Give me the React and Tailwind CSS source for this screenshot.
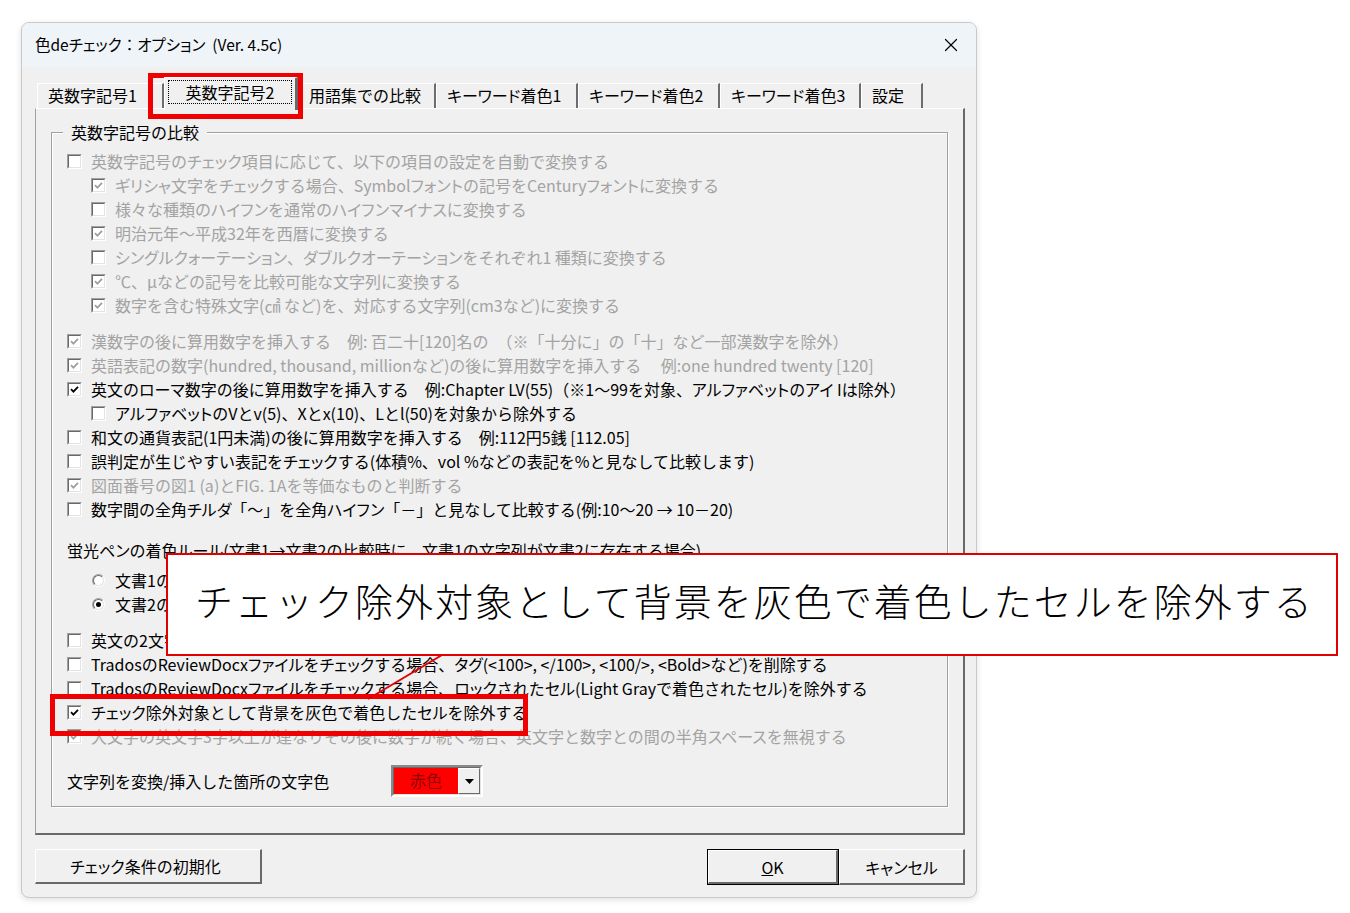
import React from "react";
import { X } from "lucide-react";

const FONT = { fontFamily: '"Noto Sans CJK JP", "Noto Sans", sans-serif' };

function J({ text }) {
  const parts = text.split(/([\u30A0-\u30FF]+)/);
  return parts.map((p, i) =>
    i % 2 ? (
      <span key={i} className="[font-feature-settings:'palt']">{p}</span>
    ) : (
      <React.Fragment key={i}>{p}</React.Fragment>
    )
  );
}

function Check({ checked, disabled }) {
  return (
    <span className="relative inline-block w-[15px] h-[15px] shrink-0 border border-t-[#a0a0a0] border-l-[#a0a0a0] border-b-white border-r-white">
      <span className="absolute inset-0 border border-t-[#696969] border-l-[#696969] border-b-[#e3e3e3] border-r-[#e3e3e3] bg-white flex items-center justify-center">
        {checked && (
          <svg width="9" height="9" viewBox="0 0 9 9">
            <path d="M1 4.2 L3.4 6.6 L8 1.8" fill="none" stroke={disabled ? "#a0a0a0" : "#000"} strokeWidth="1.8" />
          </svg>
        )}
      </span>
    </span>
  );
}

function Radio({ checked }) {
  return (
    <span className="relative inline-block w-[13px] h-[13px] shrink-0 rounded-full border border-t-[#a0a0a0] border-l-[#a0a0a0] border-b-white border-r-white">
      <span className="absolute inset-0 rounded-full border border-t-[#696969] border-l-[#696969] border-b-[#e3e3e3] border-r-[#e3e3e3] bg-white flex items-center justify-center">
        {checked && <span className="w-[5px] h-[5px] rounded-full bg-black" />}
      </span>
    </span>
  );
}

function Row({ level = 0, checked, disabled, text, mt = "" }) {
  return (
    <div className={`flex items-center h-[24px] ${level ? "pl-[24px]" : ""} ${mt}`}>
      <Check checked={checked} disabled={disabled} />
      <span className={`ml-[9px] whitespace-pre ${disabled ? "text-[#a3a3a3]" : "text-black"}`}>
        <J text={text} />
      </span>
    </div>
  );
}

function RadioRow({ checked, text, mt = "" }) {
  return (
    <div className={`flex items-center h-[24px] pl-[25px] ${mt}`}>
      <Radio checked={checked} />
      <span className="ml-[10px] whitespace-pre text-black">
        <J text={text} />
      </span>
    </div>
  );
}

const tabs = [
  { label: "英数字記号1", w: "w-[127px]" },
  { label: "英数字記号2", w: "w-[134px]", selected: true },
  { label: "用語集での比較", w: "w-[138px]" },
  { label: "キーワード着色1", w: "w-[142px]" },
  { label: "キーワード着色2", w: "w-[142px]" },
  { label: "キーワード着色3", w: "w-[141px]" },
  { label: "設定", w: "w-[62px]" },
];

export default function App() {
  return (
    <div className="relative w-[1350px] h-[913px] bg-white overflow-hidden text-[16px]" style={FONT}>
      <div className="pl-[21px] pt-[22px]">
        <div className="w-[956px] h-[876px] rounded-[8px] border border-[#c9c9c9] bg-[#f0f0f0] overflow-hidden flex flex-col shadow-[0_2px_6px_rgba(0,0,0,0.12)]">
          {/* Title bar */}
          <div className="h-[44px] shrink-0 bg-[#eff4f9] flex items-center justify-between pl-[13px] pr-[14px]">
            <span className="text-[15.5px] text-black whitespace-pre">
              <J text="色deチェック：オプション  (Ver. 4.5c)" />
            </span>
            <X size={22} strokeWidth={1.3} className="text-black" />
          </div>

          <div className="flex-1 flex flex-col pl-[13px] pr-[10px] pt-[9px]">
            {/* Tabs */}
            <div className="flex items-end h-[32px] pl-[2px]">
              {tabs.map((t) =>
                t.selected ? (
                  <div
                    key={t.label}
                    className={`${t.w} h-[33px] -mb-[2px] relative z-10 bg-[#f0f0f0] border-t border-l border-white border-r-[3px] border-r-[#696969] flex items-start px-[3px] pt-[2px]`}
                  >
                    <span className="flex-1 border border-dotted border-black h-[24px] flex items-center justify-center leading-none">{t.label}</span>
                  </div>
                ) : (
                  <div
                    key={t.label}
                    className={`${t.w} h-[25px] border-t border-l border-white border-r-2 border-r-[#6d6d6d] flex items-center pl-[10px] pb-[3px] leading-none whitespace-pre`}
                  >
                    <J text={t.label} />
                  </div>
                )
              )}
            </div>

            {/* Panel */}
            <div className="w-[930px] h-[727px] border-t border-l border-t-white border-l-[#a0a0a0] border-r-2 border-r-[#696969] border-b-2 border-b-[#696969] pl-[15px] pt-[23px]">
              <div className="relative w-[897px] h-[675px] border border-[#a0a0a0] shadow-[1px_1px_0_#fff,inset_1px_1px_0_#fff] pl-[15px] pt-[16px]">
                <span className="absolute -top-[12px] left-[11px] bg-[#f0f0f0] px-[8px] leading-[22px]">英数字記号の比較</span>

                <Row disabled text="英数字記号のチェック項目に応じて、以下の項目の設定を自動で変換する" />
                <Row level={1} disabled checked text="ギリシャ文字をチェックする場合、Symbolフォントの記号をCenturyフォントに変換する" />
                <Row level={1} disabled text="様々な種類のハイフンを通常のハイフンマイナスに変換する" />
                <Row level={1} disabled checked text="明治元年～平成32年を西暦に変換する" />
                <Row level={1} disabled text="シングルクォーテーション、ダブルクオーテーションをそれぞれ1 種類に変換する" />
                <Row level={1} disabled checked text="℃、μなどの記号を比較可能な文字列に変換する" />
                <Row level={1} disabled checked text="数字を含む特殊文字(㎠ など)を、対応する文字列(cm3など)に変換する" />

                <Row mt="mt-[12px]" disabled checked text="漢数字の後に算用数字を挿入する　例: 百二十[120]名の　（※「十分に」の「十」など一部漢数字を除外）" />
                <Row disabled checked text="英語表記の数字(hundred, thousand, millionなど)の後に算用数字を挿入する　 例:one hundred twenty [120]" />
                <Row checked text="英文のローマ数字の後に算用数字を挿入する　例:Chapter LV(55)（※1～99を対象、アルファベットのアイ Iは除外）" />
                <Row level={1} text="アルファベットのVとv(5)、Xとx(10)、Lとl(50)を対象から除外する" />
                <Row text="和文の通貨表記(1円未満)の後に算用数字を挿入する　例:112円5銭 [112.05]" />
                <Row text="誤判定が生じやすい表記をチェックする(体積%、vol %などの表記を%と見なして比較します)" />
                <Row disabled checked text="図面番号の図1 (a)とFIG. 1Aを等価なものと判断する" />
                <Row text="数字間の全角チルダ「～」を全角ハイフン「－」と見なして比較する(例:10～20 → 10－20)" />

                <div className="h-[24px] flex items-center mt-[17px] whitespace-pre">
                  <span><J text="蛍光ペンの着色ルール(文書1→文書2の比較時に、文書1の文字列が文書2に存在する場合)" /></span>
                </div>
                <RadioRow mt="mt-[6px]" text="文書1の該当箇所を着色する" />
                <RadioRow checked text="文書2の該当箇所を着色する" />

                <Row mt="mt-[12px]" text="英文の2文字以上の大文字を比較対象とする" />
                <Row text="TradosのReviewDocxファイルをチェックする場合、タグ(<100>, </100>, <100/>, <Bold>など)を削除する" />
                <Row text="TradosのReviewDocxファイルをチェックする場合、ロックされたセル(Light Grayで着色されたセル)を除外する" />
                <Row checked text="チェック除外対象として背景を灰色で着色したセルを除外する" />
                <Row disabled checked text="大文字の英文字3字以上が連なりその後に数字が続く場合、英文字と数字との間の半角スペースを無視する" />

                <div className="flex items-center mt-[17px] h-[32px]">
                  <span className="w-[324px] whitespace-pre">文字列を変換/挿入した箇所の文字色</span>
                  <div className="w-[92px] h-[32px] border-2 border-t-[#8a8a8a] border-l-[#8a8a8a] border-b-white border-r-white flex">
                    <div className="flex-1 flex border border-t-[#696969] border-l-[#696969] border-b-[#e3e3e3] border-r-[#e3e3e3]">
                      <div className="w-[64px] bg-[#ff0000] text-[#8c0000] flex items-start justify-center pt-[1px] leading-[22px]">赤色</div>
                      <div className="flex-1 bg-[#f0f0f0] border-t border-l border-white border-r border-b border-r-[#696969] border-b-[#696969] flex items-center justify-center">
                        <svg width="9" height="5" viewBox="0 0 9 5"><path d="M0 0 H9 L4.5 5 Z" fill="#000" /></svg>
                      </div>
                    </div>
                  </div>
                </div>
              </div>
            </div>

            {/* Buttons */}
            <div className="flex mt-[14px] w-[930px] items-start">
              <div className="w-[227px] h-[35px] border-t border-l border-white border-r-2 border-b-2 border-r-[#696969] border-b-[#696969] flex items-center pl-[34px] bg-[#f0f0f0]">
                <span><J text="チェック条件の初期化" /></span>
              </div>
              <div className="flex-1" />
              <div className="w-[132px] h-[36px] border border-black">
                <div className="w-full h-full border-t border-l border-white border-r-2 border-b-2 border-r-[#696969] border-b-[#696969] flex items-center justify-center">
                  <span><span className="underline">O</span>K</span>
                </div>
              </div>
              <div className="w-[126px] h-[36px] border-t border-l border-white border-r-2 border-b-2 border-r-[#696969] border-b-[#696969] flex items-center justify-center">
                <span><J text="キャンセル" /></span>
              </div>
            </div>
          </div>
        </div>
      </div>

      {/* Annotations */}
      <div className="absolute left-[148px] top-[73px] w-[155px] h-[46px] border-[5px] border-[#f00000]" />
      <div className="absolute left-[50px] top-[694px] w-[478px] h-[42px] border-[5px] border-[#f00000]" />
      <svg className="absolute left-0 top-0 pointer-events-none" width="1350" height="913">
        <line x1="442" y1="655" x2="368" y2="699" stroke="#e00000" strokeWidth="2" />
      </svg>
      <div className="absolute left-[166px] top-[553px] w-[1172px] h-[103px] bg-white border-2 border-[#e00000] flex items-center pl-[27px] pb-[10px]">
        <span className="text-[38px] font-light text-black tracking-[2px] leading-none whitespace-nowrap">チェック除外対象として背景を灰色で着色したセルを除外する</span>
      </div>
    </div>
  );
}
